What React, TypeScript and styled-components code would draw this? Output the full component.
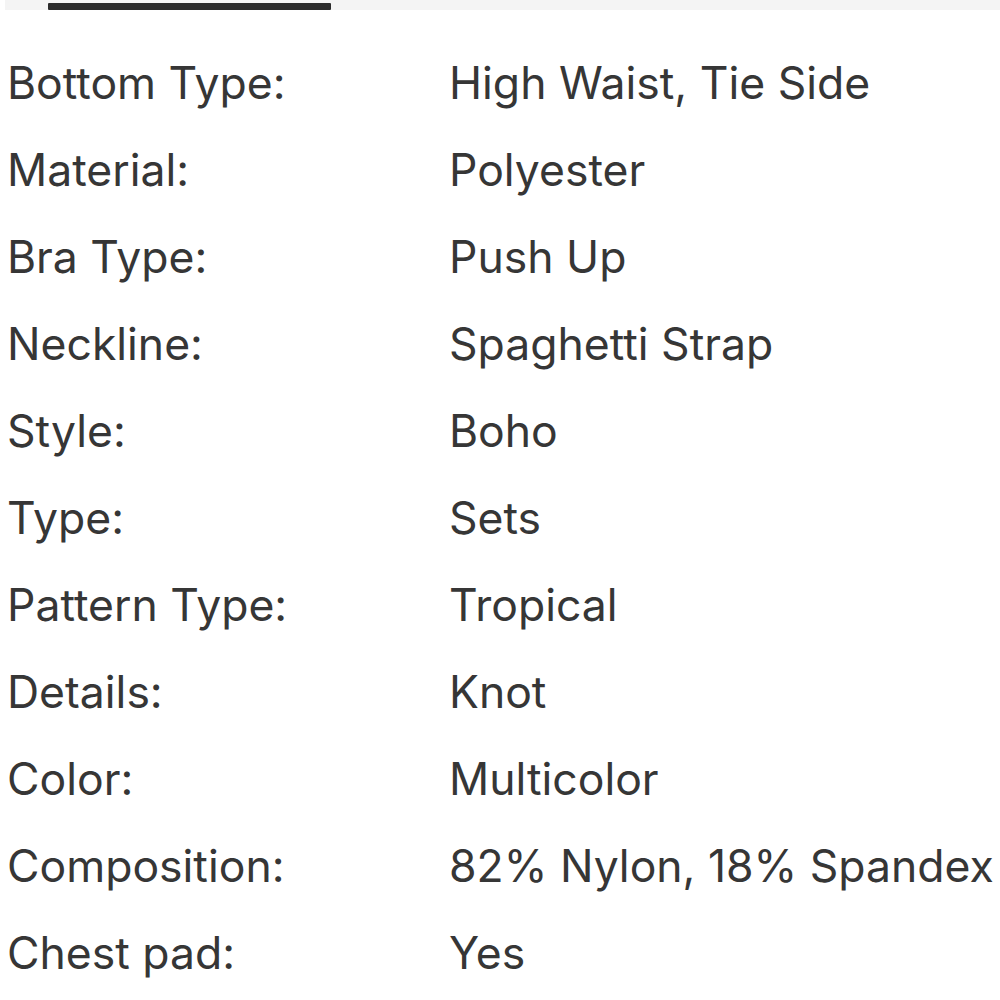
import styled, { createGlobalStyle } from "styled-components";

const GlobalStyle = createGlobalStyle`
  body {
    margin: 0;
    background: #ffffff;
    font-family: "Inter", "Roboto", sans-serif;
  }
`;

const Page = styled.div`
  width: 1000px;
  height: 1000px;
  overflow: hidden;
  background: #ffffff;
`;

const TabBar = styled.div`
  height: 10px;
  margin-left: 5px;
  background: #f4f4f4;
  display: flex;
  align-items: flex-end;
`;

const TabIndicator = styled.div`
  margin-left: 43px;
  width: 283px;
  height: 7px;
  background: #2b2b2b;
  border-radius: 1px;
`;

const SpecList = styled.dl`
  margin: 0;
  padding: 29px 0 0 7px;
  display: grid;
  grid-template-columns: 442px 1fr;
  grid-auto-rows: 87px;
  align-items: center;
`;

const Label = styled.dt`
  margin: 0;
  font-size: 44.5px;
  color: #363636;
  white-space: nowrap;
`;

const Value = styled.dd`
  margin: 0;
  font-size: 44.5px;
  color: #363636;
  white-space: nowrap;
`;

const specs: [string, string][] = [
  ["Bottom Type:", "High Waist, Tie Side"],
  ["Material:", "Polyester"],
  ["Bra Type:", "Push Up"],
  ["Neckline:", "Spaghetti Strap"],
  ["Style:", "Boho"],
  ["Type:", "Sets"],
  ["Pattern Type:", "Tropical"],
  ["Details:", "Knot"],
  ["Color:", "Multicolor"],
  ["Composition:", "82% Nylon, 18% Spandex"],
  ["Chest pad:", "Yes"],
];

const App = () => {
  return (
    <Page>
      <GlobalStyle />
      <TabBar>
        <TabIndicator />
      </TabBar>
      <SpecList>
        {specs.map(([label, value]) => (
          <>
            <Label key={`l-${label}`}>{label}</Label>
            <Value key={`v-${label}`}>{value}</Value>
          </>
        ))}
      </SpecList>
    </Page>
  );
};

export default App;
